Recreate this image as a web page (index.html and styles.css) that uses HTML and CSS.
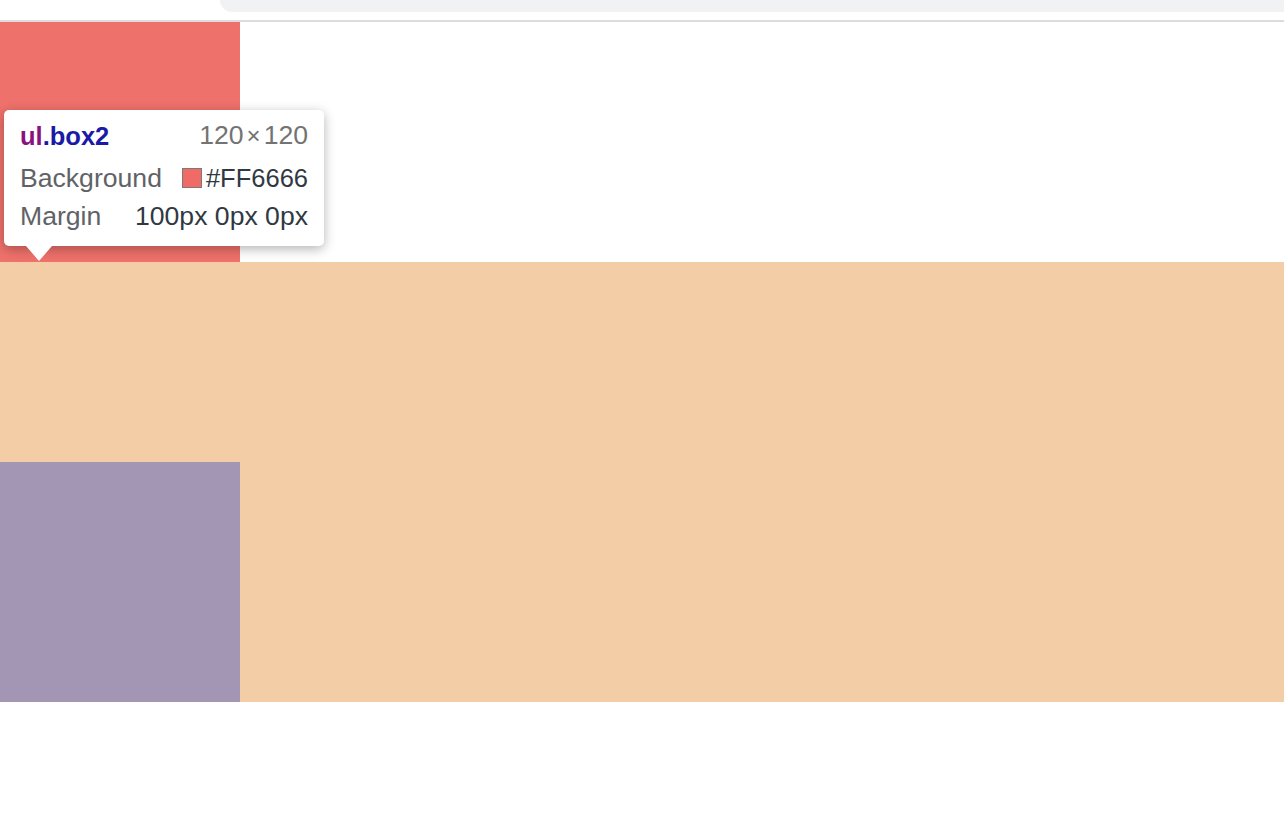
FILE: index.html
```html
<!DOCTYPE html>
<html>
<head>
<meta charset="utf-8">
<link rel="stylesheet" href="styles.css">
</head>
<body>
<div class="chrome">
  <div class="chrome-tab"></div>
</div>
<div class="page">
  <div class="box-red"></div>
  <div class="box-orange">
    <div class="box-purple"></div>
  </div>
  <div class="tooltip">
    <div class="row head">
      <span class="sel"><span class="tag">ul</span><span class="cls">.box2</span></span>
      <span class="dims">120<span class="times">×</span>120</span>
    </div>
    <div class="row">
      <span class="label">Background</span>
      <span class="value"><span class="swatch"></span><span class="hex">#FF6666</span></span>
    </div>
    <div class="row">
      <span class="label">Margin</span>
      <span class="value">100px 0px 0px</span>
    </div>
    <div class="arrow"></div>
  </div>
</div>
</body>
</html>
```

FILE: styles.css
```css
html, body {
  margin: 0;
  padding: 0;
  background: #ffffff;
  font-family: "Liberation Sans", Arial, sans-serif;
}

.chrome {
  height: 20px;
  border-bottom: 2px solid #dcdce0;
  background: #ffffff;
  display: flex;
  justify-content: flex-end;
}

.chrome-tab {
  width: 1064px;
  height: 12px;
  background: #f1f2f4;
  border-bottom-left-radius: 14px;
}

.page {
  position: relative;
}

.box-red {
  width: 240px;
  height: 240px;
  background: #ef716b;
}

.box-orange {
  height: 440px;
  background: #f3cda5;
  padding-top: 200px;
  box-sizing: border-box;
}

.box-purple {
  width: 240px;
  height: 240px;
  background: #a396b4;
}

.tooltip {
  position: absolute;
  left: 4px;
  top: 88px;
  width: 320px;
  height: 136px;
  box-sizing: border-box;
  padding: 6px 16px 0;
  background: #ffffff;
  border-radius: 5px;
  box-shadow: 0 3px 12px rgba(0, 0, 0, 0.3);
  font-size: 26.6px;
  line-height: 38px;
}

.row {
  display: flex;
  justify-content: space-between;
  align-items: center;
  white-space: nowrap;
}

.row.head {
  margin-bottom: 4px;
}

.sel {
  font-weight: bold;
  font-size: 25.5px;
}

.tag {
  color: #881280;
}

.cls {
  color: #1a1aa6;
}

.dims {
  color: #737373;
}

.times {
  font-size: 24px;
  margin: 0 3px;
}

.label {
  color: #5f6368;
}

.value {
  color: #303942;
  display: flex;
  align-items: center;
}

.hex {
  font-size: 25.5px;
}

.swatch {
  width: 18px;
  height: 18px;
  background: #f06a66;
  border: 1px solid #7a7a7a;
  margin-right: 4px;
}

.arrow {
  position: absolute;
  left: 22px;
  bottom: -15px;
  width: 0;
  height: 0;
  border-left: 13px solid transparent;
  border-right: 13px solid transparent;
  border-top: 15px solid #ffffff;
}
```
